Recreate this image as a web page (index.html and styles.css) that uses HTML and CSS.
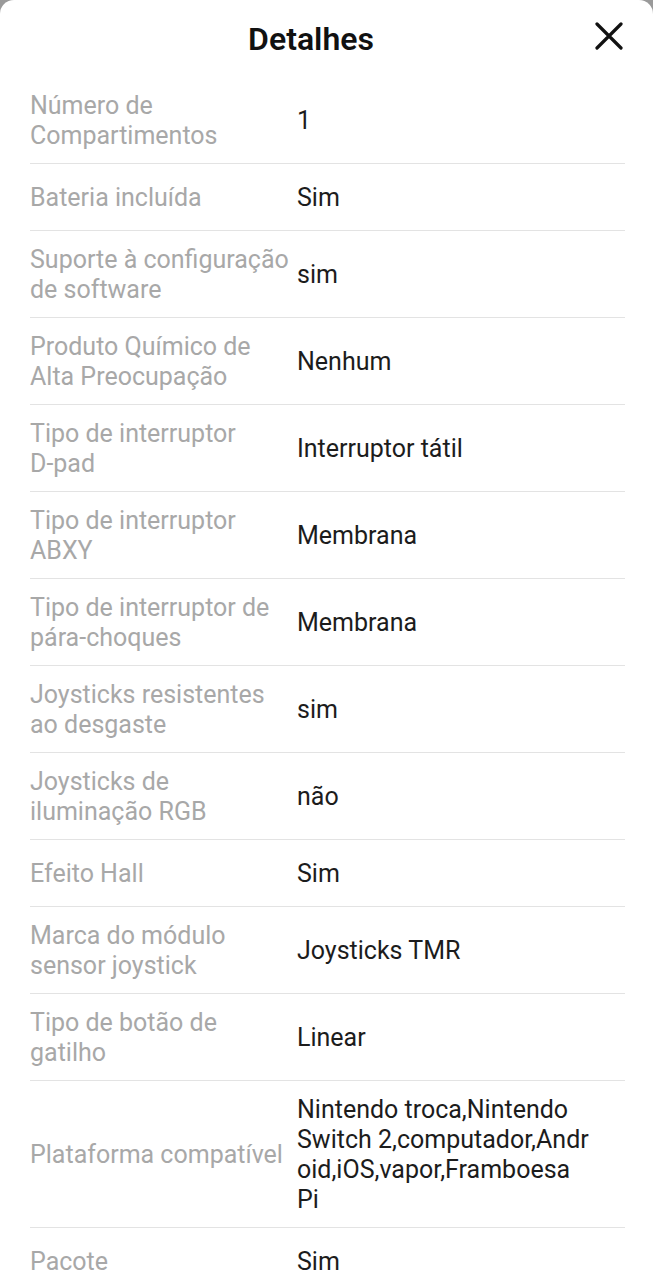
FILE: index.html
```html
<!DOCTYPE html>
<html lang="pt">
<head>
<meta charset="utf-8">
<title>Detalhes</title>
<link rel="stylesheet" href="styles.css">
</head>
<body>
<div class="sheet">
  <header class="header">
    <h1 class="title">Detalhes</h1>
    <button class="close" aria-label="Fechar">
      <svg width="28" height="28" viewBox="0 0 28 28"><path d="M2 2 L26 26 M26 2 L2 26" stroke="#111" stroke-width="3.2" stroke-linecap="round" fill="none"/></svg>
    </button>
  </header>
  <div class="list">
    <div class="row"><div class="label">Número de Compartimentos</div><div class="value">1</div></div>
    <div class="row"><div class="label">Bateria incluída</div><div class="value">Sim</div></div>
    <div class="row"><div class="label">Suporte à configuração de software</div><div class="value">sim</div></div>
    <div class="row"><div class="label">Produto Químico de Alta Preocupação</div><div class="value">Nenhum</div></div>
    <div class="row"><div class="label">Tipo de interruptor <span class="nowrap">D-pad</span></div><div class="value">Interruptor tátil</div></div>
    <div class="row"><div class="label">Tipo de interruptor ABXY</div><div class="value">Membrana</div></div>
    <div class="row"><div class="label">Tipo de interruptor de pára-choques</div><div class="value">Membrana</div></div>
    <div class="row"><div class="label">Joysticks resistentes ao desgaste</div><div class="value">sim</div></div>
    <div class="row"><div class="label">Joysticks de iluminação RGB</div><div class="value">não</div></div>
    <div class="row"><div class="label">Efeito Hall</div><div class="value">Sim</div></div>
    <div class="row"><div class="label">Marca do módulo sensor joystick</div><div class="value">Joysticks TMR</div></div>
    <div class="row"><div class="label">Tipo de botão de gatilho</div><div class="value">Linear</div></div>
    <div class="row"><div class="label">Plataforma compatível</div><div class="value">Nintendo troca,Nintendo Switch&nbsp;2,computador,Android,iOS,vapor,Framboesa Pi</div></div>
    <div class="row"><div class="label">Pacote</div><div class="value">Sim</div></div>
  </div>
</div>
</body>
</html>
```

FILE: styles.css
```css
html, body {
  margin: 0;
  padding: 0;
  background: #9a9a9a;
}
body {
  font-family: Roboto, "Noto Sans", "Liberation Sans", sans-serif;
  width: 653px;
  height: 1280px;
  overflow: hidden;
}
.sheet {
  background: #fff;
  border-radius: 14px 14px 0 0;
  min-height: 1280px;
}
.header {
  height: 77px;
  display: flex;
  align-items: center;
  justify-content: center;
  padding-right: 31px;
  position: relative;
}
.title {
  margin: 0;
  font-size: 32px;
  font-weight: 600;
  color: #111;
  letter-spacing: 0;
}
.close {
  position: absolute;
  right: 30px;
  top: 22px;
  width: 28px;
  height: 28px;
  padding: 0;
  border: 0;
  background: none;
  display: flex;
}
.list {
  margin: 0 28px 0 30px;
}
.row {
  display: flex;
  align-items: center;
  min-height: 40px;
  padding: 14px 0 12px;
  border-bottom: 1px solid #e3e3e3;
}
.label {
  width: 262px;
  flex: none;
  font-size: 25px;
  line-height: 30px;
  color: #a8a8a8;
}
.nowrap {
  white-space: nowrap;
}
.value {
  flex: 1;
  margin-left: 5px;
  padding-right: 27px;
  font-size: 25px;
  line-height: 30px;
  color: #1c1c1c;
  overflow-wrap: anywhere;
}
```
